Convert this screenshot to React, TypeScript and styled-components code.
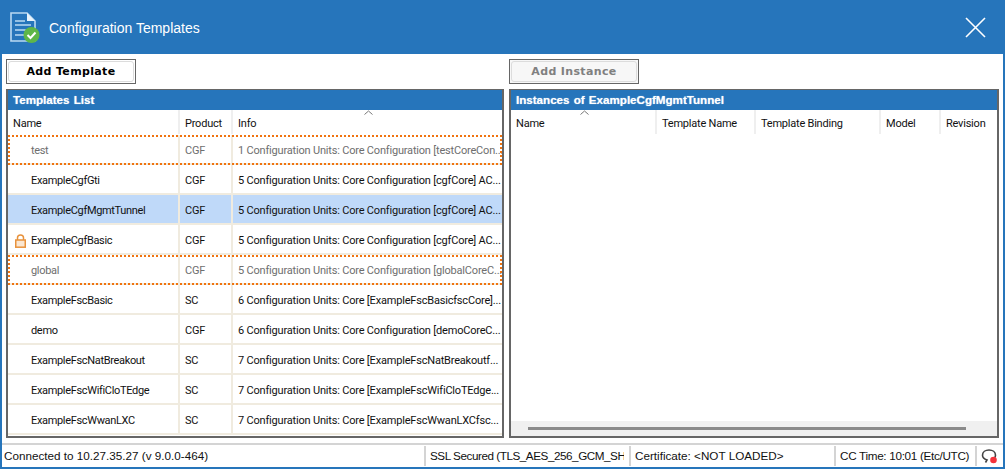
import React from "react";
import styled, { createGlobalStyle } from "styled-components";

const Global = createGlobalStyle`
  html, body { margin: 0; padding: 0; background: #fff; }
  * { box-sizing: border-box; }
`;

const BLUE = "#2675bb";

const Win = styled.div`
  width: 1005px; height: 469px; display: flex; flex-direction: column;
  border: solid ${BLUE}; border-width: 0 2px 2px 2px;
  background: #fff; font-family: Roboto, "Liberation Sans", Arial, sans-serif; font-size: 11px; color: #111;
  overflow: hidden;
`;
const TitleBar = styled.header`
  height: 54px; flex: none; margin: 0 -2px; background: ${BLUE}; display: flex; align-items: center;
  padding: 0 19px 0 10px; color: #fff;
`;
const TitleText = styled.h1`
  margin: 0 0 0 9px; flex: 1; font: 400 14px "Liberation Sans", Arial, sans-serif; padding-top: 2px;
`;
const Body = styled.main`
  flex: 1; display: grid; grid-template-columns: 498px 490px; column-gap: 5px; padding: 5px 0 0 4px;
  min-height: 0;
`;
const Col = styled.section`display: flex; flex-direction: column; gap: 5px;`;
const Btn = styled.button<{ $off?: boolean }>`
  width: 130px; height: 25px; padding: 0; border: 1px solid #666; position: relative;
  font: 700 11px "DejaVu Sans", sans-serif; letter-spacing: 0.35px;
  color: ${p => (p.$off ? "#808080" : "#000")};
  background: ${p => (p.$off ? "#f7f7f7" : "#fff")};
  &::after { content: ""; position: absolute; inset: 1px; border: 1px solid #dcdcdc; border-radius: 3px; }
`;
const Panel = styled.div`
  height: 349px; border: 1px solid #666; border-width: 1px 2px 2px 2px; display: flex; flex-direction: column; overflow: hidden;
`;
const PanelHead = styled.div`
  height: 20px; flex: none; background: ${BLUE}; color: #fff; font: 700 11.6px/20px "Liberation Sans", Arial, sans-serif;
  word-spacing: 1px; padding-left: 5px; text-shadow: 0 0 1px rgba(255,255,255,.7);
`;
const HeadRow = styled.div<{ $cols: string }>`
  height: 25px; flex: none; display: grid; grid-template-columns: ${p => p.$cols}; position: relative;
`;
const HeadCell = styled.div`
  padding: 1px 0 0 5px; line-height: 26px; white-space: nowrap; overflow: hidden; letter-spacing: -0.22px;
  border-left: 2px solid #efefef; height: 24px;
  &:first-child { border-left: 0; padding-left: 5px; }
`;
const Caret = styled.svg<{ $x: number }>`
  position: absolute; top: 0; left: ${p => p.$x}px; width: 9px; height: 6px;
`;
const Rows = styled.div`display: flex; flex-direction: column;`;
const Row = styled.div<{ $sel?: boolean; $dim?: boolean; $cols: string }>`
  height: 30px; display: grid; grid-template-columns: ${p => p.$cols}; position: relative;
  background: ${p => (p.$sel ? "#bfd9f9" : "#fff")};
  color: ${p => (p.$dim ? "#6e6e6e" : "#111")};
  border-bottom: 2px solid #f0ebdf;
`;
const DotFrame = styled.div`
  position: absolute; inset: 0 0 -2px 0; border: 2px dotted #f0730f; pointer-events: none;
`;
const NameCell = styled.div`
  display: flex; align-items: center; padding: 3px 0 0 7px; gap: 5px; line-height: 28px; white-space: nowrap; overflow: hidden;
  letter-spacing: -0.33px;
`;
const IconSlot = styled.span`width: 11px; height: 14px; flex: none; display: flex;`;
const Cell = styled.div`
  padding: 1px 0 0 5px; line-height: 30px; white-space: nowrap; overflow: hidden; letter-spacing: -0.19px;
  border-left: 2px solid #f0ebdf;
`;
const EmptyArea = styled.div`flex: 1; background: #fff;`;
const HScroll = styled.div`
  height: 15px; flex: none; background: #f0f0f0; display: flex; align-items: center; padding: 0 31px 0 17px;
`;
const Thumb = styled.div`height: 3px; flex: 1; background: #8a8a8a;`;
const Status = styled.footer`
  height: 24px; flex: none; margin-top: 5px; border-top: 2px solid #d4d4d4;
  display: grid; grid-template-columns: 422px 205px 205px 141px 1fr; align-items: center;
  font: 400 11.7px "Liberation Sans", Arial, sans-serif;
`;
const Seg = styled.div<{ $spacing?: string }>`
  height: 20px; line-height: 20px; padding-left: 4px; border-left: 2px solid #d4d4d4; white-space: nowrap; overflow: hidden;
  clip-path: inset(0 5px 0 0);
  letter-spacing: ${p => p.$spacing ?? "0"};
  &:first-child { border-left: 0; padding-left: 2px; }
`;
const IconSeg = styled.div`
  height: 20px; padding-left: 4px; border-left: 2px solid #d4d4d4; display: flex; align-items: center;
`;

const LogoIcon = () => (
  <svg width="30" height="34" viewBox="0 0 30 34" style={{ flex: "none" }}>
    <path d="M1 3h16l8 8v20H1z" fill="none" stroke="#b9d9f2" strokeWidth="1.6" />
    <path d="M17 3v8h8z" fill="#e8f3fb" />
    <path d="M5 11h10M5 15h16M5 20h16M5 25h10" stroke="#b9d9f2" strokeWidth="1.5" />
    <circle cx="21.5" cy="25" r="8" fill="#5eb648" />
    <path d="M17.5 25l3 3 5-5.5" fill="none" stroke="#fff" strokeWidth="2" />
  </svg>
);
const CloseIcon = () => (
  <svg width="21" height="21" viewBox="0 0 21 21" style={{ flex: "none" }}>
    <path d="M1 1l19 19M20 1L1 20" stroke="#fff" strokeWidth="1.6" />
  </svg>
);
const LockIcon = () => (
  <svg width="11" height="14" viewBox="0 0 11 14">
    <path d="M2.5 6V3.8C2.5 2 3.8 1 5.5 1s3 1 3 2.8V6" fill="none" stroke="#e8923c" strokeWidth="1.5" />
    <rect x="0.75" y="6" width="9.5" height="7.2" fill="#fbe7d2" stroke="#e8923c" strokeWidth="1.5" />
  </svg>
);
const CaretIcon = ({ x }: { x: number }) => (
  <Caret $x={x} viewBox="0 0 9 6"><path d="M.5 4.5l4-3.5 4 3.5" fill="none" stroke="#777" strokeWidth="1" /></Caret>
);
const LinkIcon = () => (
  <svg width="17" height="17" viewBox="0 0 17 17">
    <path d="M4.5 14.5L6 12C3 11 1.5 9.5 1.5 7.2 1.5 4 4.5 2 8 2s6.5 2 6.5 5.2c0 1-.3 1.8-.8 2.5" fill="none" stroke="#444" strokeWidth="1.6" />
    <circle cx="12.5" cy="12" r="3.3" fill="#f4333b" />
  </svg>
);

const LEFT = "170px 53px 1fr";
const RIGHT = "144px 99px 125px 60px 1fr";

const rows = [
  { n: "test", p: "CGF", i: "1 Configuration Units: Core Configuration [testCoreCon...", dim: true },
  { n: "ExampleCgfGti", p: "CGF", i: "5 Configuration Units: Core Configuration [cgfCore] AC..." },
  { n: "ExampleCgfMgmtTunnel", p: "CGF", i: "5 Configuration Units: Core Configuration [cgfCore] AC...", sel: true },
  { n: "ExampleCgfBasic", p: "CGF", i: "5 Configuration Units: Core Configuration [cgfCore] AC...", lock: true },
  { n: "global", p: "CGF", i: "5 Configuration Units: Core Configuration [globalCoreC...", dim: true },
  { n: "ExampleFscBasic", p: "SC", i: "6 Configuration Units: Core [ExampleFscBasicfscCore]..." },
  { n: "demo", p: "CGF", i: "6 Configuration Units: Core Configuration [demoCoreC..." },
  { n: "ExampleFscNatBreakout", p: "SC", i: "7 Configuration Units: Core [ExampleFscNatBreakoutf..." },
  { n: "ExampleFscWifiCloTEdge", p: "SC", i: "7 Configuration Units: Core [ExampleFscWifiCloTEdge..." },
  { n: "ExampleFscWwanLXC", p: "SC", i: "7 Configuration Units: Core [ExampleFscWwanLXCfsc..." },
];

export default function App() {
  return (
    <>
      <Global />
      <Win>
        <TitleBar>
          <LogoIcon />
          <TitleText>Configuration Templates</TitleText>
          <CloseIcon />
        </TitleBar>
        <Body>
          <Col>
            <Btn>Add Template</Btn>
            <Panel>
              <PanelHead>Templates List</PanelHead>
              <HeadRow $cols={LEFT}>
                <HeadCell>Name</HeadCell>
                <HeadCell>Product</HeadCell>
                <HeadCell>Info</HeadCell>
                <CaretIcon x={356} />
              </HeadRow>
              <Rows>
                {rows.map(r => (
                  <Row key={r.n} $cols={LEFT} $sel={r.sel} $dim={r.dim}>
                    <NameCell>
                      <IconSlot>{r.lock && <LockIcon />}</IconSlot>
                      {r.n}
                    </NameCell>
                    <Cell>{r.p}</Cell>
                    <Cell>{r.i}</Cell>
                    {r.dim && <DotFrame />}
                  </Row>
                ))}
              </Rows>
            </Panel>
          </Col>
          <Col>
            <Btn $off>Add Instance</Btn>
            <Panel>
              <PanelHead>Instances of ExampleCgfMgmtTunnel</PanelHead>
              <HeadRow $cols={RIGHT}>
                <HeadCell>Name</HeadCell>
                <HeadCell>Template Name</HeadCell>
                <HeadCell>Template Binding</HeadCell>
                <HeadCell>Model</HeadCell>
                <HeadCell>Revision</HeadCell>
                <CaretIcon x={69} />
              </HeadRow>
              <EmptyArea />
              <HScroll><Thumb /></HScroll>
            </Panel>
          </Col>
        </Body>
        <Status>
          <Seg>Connected to 10.27.35.27 (v 9.0.0-464)</Seg>
          <Seg $spacing="-0.45px">SSL Secured (TLS_AES_256_GCM_SHA</Seg>
          <Seg>Certificate: &lt;NOT LOADED&gt;</Seg>
          <Seg $spacing="-0.3px">CC Time: 10:01 (Etc/UTC)</Seg>
          <IconSeg><LinkIcon /></IconSeg>
        </Status>
      </Win>
    </>
  );
}
